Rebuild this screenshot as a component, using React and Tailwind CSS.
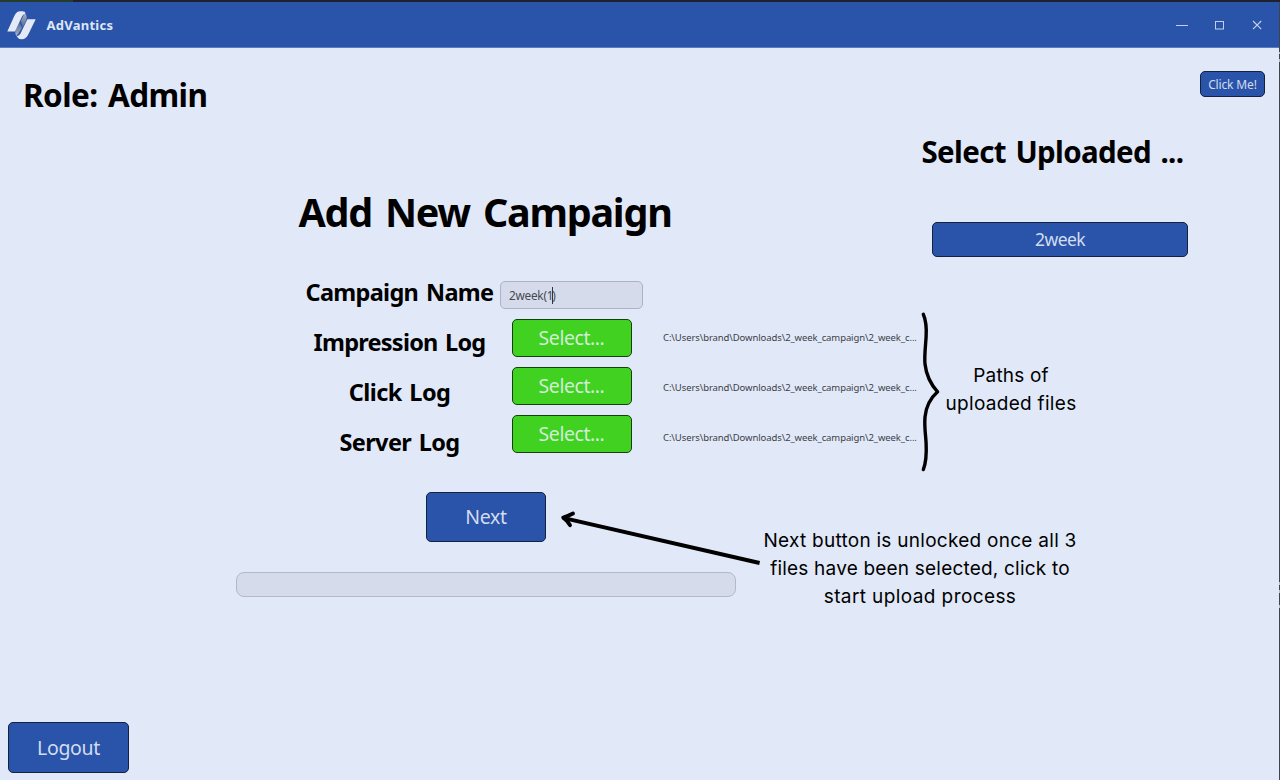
const FILE_PATH = "C:\\Users\\brand\\Downloads\\2_week_campaign\\2_week_c...";

const LOGS = [
  { name: "Impression Log", tracking: "tracking-[-0.75px]" },
  { name: "Click Log", tracking: "tracking-[-0.55px]" },
  { name: "Server Log", tracking: "tracking-[-0.6px]" },
];

function Logo() {
  return (
    <svg width="32" height="32" viewBox="0 0 32 32" className="-mt-px shrink-0">
      <defs>
        <linearGradient id="foldTop" x1="0" y1="0" x2="0" y2="1">
          <stop offset="0" stopColor="#a9b2c6" />
          <stop offset="1" stopColor="#55688f" />
        </linearGradient>
        <linearGradient id="foldBottom" x1="0" y1="0" x2="0" y2="1">
          <stop offset="0" stopColor="#4f6495" />
          <stop offset="1" stopColor="#a9b2c6" />
        </linearGradient>
      </defs>
      <path d="M17.5 5 C20 7 20 9.5 19 13 L15.8 19.5 L14 13 Z" fill="url(#foldTop)" />
      <path d="M9.6 28 C8 26.5 7.8 24 9 21 L12.5 14 L15 20 Z" fill="url(#foldBottom)" />
      <path d="M0.3 23.4 L7.4 7.7 C9 4.4 10.8 3.2 13.3 3.2 H15.6 Q18 3.2 18.7 5.2 C16.4 6 15.4 7.6 14.4 9.7 L8 23.4 Z" fill="#e3e9f6" />
      <path d="M28.7 11.2 L21.5 26 C19.6 29.8 17.6 31.2 15 31.2 Q11.4 31.2 9.6 28.4 C11.8 28 13 26.6 14 24.6 L20.4 11.2 Z" fill="#e3e9f6" />
    </svg>
  );
}

function TitleBar() {
  return (
    <header className="flex h-[48px] shrink-0 flex-col">
      <div className="flex h-[2px] bg-[#1d222c]">
        <div className="w-[73px] bg-[#263d2e]" />
      </div>
      <div className="flex h-[46px] items-center border-b border-[#5b7bc0] bg-[#2954a9] pl-[7px] pr-[18px]">
        <Logo />
        <span className="ml-[7.5px] text-[13px] font-bold leading-5 tracking-[0.25px] text-[#dfe6f5]">AdVantics</span>
        <div className="ml-auto flex items-center pt-px">
          <svg width="86" height="12" viewBox="0 0 86 12" fill="none" stroke="#c3cfe8">
            <path d="M0 6.5 H12" />
            <rect x="39.5" y="2.5" width="8" height="7.5" />
            <path d="M77 2 L85.2 10.2 M85.2 2 L77 10.2" strokeWidth="1.2" />
          </svg>
        </div>
      </div>
    </header>
  );
}

function BlueButton({ className, children }) {
  return (
    <button
      className={
        "flex items-center justify-center whitespace-nowrap rounded-[5px] border border-[#14213f] bg-[#2954a9] text-[#d3dcef] " +
        className
      }
    >
      {children}
    </button>
  );
}

function CampaignForm() {
  return (
    <div className="ml-[299px] mt-[25px] grid h-[200px] grid-cols-[201px_143px_1fr]">
      <div className="flex flex-col text-center text-[23.5px] font-bold leading-[50px] text-black">
        <label className="whitespace-nowrap tracking-[-0.7px] [word-spacing:2.5px]">Campaign Name</label>
        {LOGS.map((log) => (
          <label key={log.name} className={"whitespace-nowrap [word-spacing:2px] " + log.tracking}>
            {log.name}
          </label>
        ))}
      </div>
      <div className="flex flex-col items-center gap-[10px] pt-[14px]">
        <div className="flex h-[28px] w-full shrink-0 items-center rounded-[5px] border border-[#adb3c6] bg-[#d5dbea] pl-[8px] pt-px text-[11.8px] tracking-[-0.25px] text-[#454a55]">
          <span>2week(1</span>
          <span className="-mx-px h-[17px] w-px bg-[#30343c]" />
          <span>)</span>
        </div>
        {LOGS.map((log) => (
          <button
            key={log.name}
            className="flex h-[38px] w-[120px] shrink-0 items-center justify-center rounded-[5px] border border-[#17400f] bg-[#41d121] text-[19.5px] leading-none tracking-[-0.45px] text-[#d3ecd9]"
          >
            Select...
          </button>
        ))}
      </div>
      <div className="flex flex-col pl-[20px] pt-[46px] text-[9.5px] leading-[50px] tracking-[-0.09px] text-[#3c4049]">
        {LOGS.map((log) => (
          <span key={log.name} className="whitespace-nowrap">
            {FILE_PATH}
          </span>
        ))}
      </div>
    </div>
  );
}

function Annotations() {
  return (
    <div className="pointer-events-none absolute inset-0 text-center font-['Inter',sans-serif] text-[19px] leading-[28px] text-black">
      <svg className="absolute inset-0" width="1280" height="780" viewBox="0 0 1280 780" fill="none" stroke="#000" strokeLinecap="round" strokeLinejoin="round">
        <path
          strokeWidth="3.4"
          d="M923.3 314.3 C926.3 321 926.6 329 926.1 337 C925.5 347 924.2 356 925 364 C926.2 375 930.5 384 937.6 391.8 C930 398.5 926 407 925 417 C924.2 427 925.6 434 926.1 443 C926.6 453 926.3 462 923.3 469.6"
        />
        <path strokeWidth="3.9" strokeLinecap="butt" d="M563 517.8 L759.6 563" />
        <path strokeWidth="3.9" d="M573 513.6 Q567.5 516.4 563.2 517.6 Q567.5 520.5 570 525.2" />
      </svg>
      <p className="absolute left-[911px] top-[362px] w-[200px]">
        <span className="block whitespace-nowrap tracking-[0.2px]">Paths of</span>
        <span className="block whitespace-nowrap tracking-[0.3px]">uploaded files</span>
      </p>
      <p className="absolute left-[745px] top-[527px] w-[350px]">
        <span className="block whitespace-nowrap tracking-[0.27px]">Next button is unlocked once all 3</span>
        <span className="block whitespace-nowrap tracking-[0.2px]">files have been selected, click to</span>
        <span className="block whitespace-nowrap tracking-[0.4px]">start upload process</span>
      </p>
    </div>
  );
}

function WindowEdge() {
  return (
    <div className="absolute right-0 top-[2px] flex h-[778px] w-px flex-col bg-[#3f4550]">
      <div className="mt-[50px] h-[2px] bg-[#b7bcc2]" />
      <div className="mt-[5px] h-[3px] bg-[#b7bcc2]" />
      <div className="mt-[520px] h-[3px] bg-[#b7bcc2]" />
      <div className="mt-[5px] h-[3px] bg-[#b7bcc2]" />
      <div className="mt-[12px] h-[3px] bg-[#b7bcc2]" />
    </div>
  );
}

export default function App() {
  return (
    <div className="relative flex h-[780px] w-[1280px] flex-col overflow-hidden bg-[#e1e8f7] font-['Noto_Sans',sans-serif]">
      <TitleBar />
      <div className="flex min-h-0 flex-1">
        <main className="flex w-[920px] shrink-0 flex-col">
          <h2 className="ml-[23px] mt-[25px] whitespace-nowrap text-[31.5px] font-bold leading-[44px] tracking-[-0.6px] text-black [word-spacing:3px]">
            Role: Admin
          </h2>
          <h1 className="ml-[235px] mt-[65px] w-[500px] whitespace-nowrap text-center text-[39.5px] font-bold leading-[60px] tracking-[-1.25px] text-black [word-spacing:4px]">
            Add New Campaign
          </h1>
          <CampaignForm />
          <div className="ml-[236px] mt-[25px] flex w-[500px] flex-col items-center gap-[30px]">
            <BlueButton className="h-[50px] w-[120px] text-[19.5px] leading-none tracking-[-0.35px]">Next</BlueButton>
            <div className="h-[25px] w-full rounded-[8px] border border-[#b3b9ca] bg-[#d5dbea]" />
          </div>
          <BlueButton className="mb-[7px] ml-[8px] mt-auto h-[51px] w-[121px] text-[19.5px] leading-none tracking-[-0.35px]">
            Logout
          </BlueButton>
        </main>
        <aside className="flex w-[345px] flex-col">
          <BlueButton className="mt-[23px] h-[26px] w-[65px] self-end pt-px text-[12px] leading-none tracking-[-0.15px]">
            Click Me!
          </BlueButton>
          <h2 className="ml-[1.5px] mt-[33px] whitespace-nowrap text-[29.5px] font-bold leading-[44px] tracking-[-0.65px] text-black [word-spacing:2.5px]">
            Select Uploaded ...
          </h2>
          <BlueButton className="ml-[12px] mt-[48px] h-[35px] w-[256px] text-[17.5px] leading-none tracking-[-0.6px]">
            2week
          </BlueButton>
        </aside>
      </div>
      <WindowEdge />
      <Annotations />
    </div>
  );
}
